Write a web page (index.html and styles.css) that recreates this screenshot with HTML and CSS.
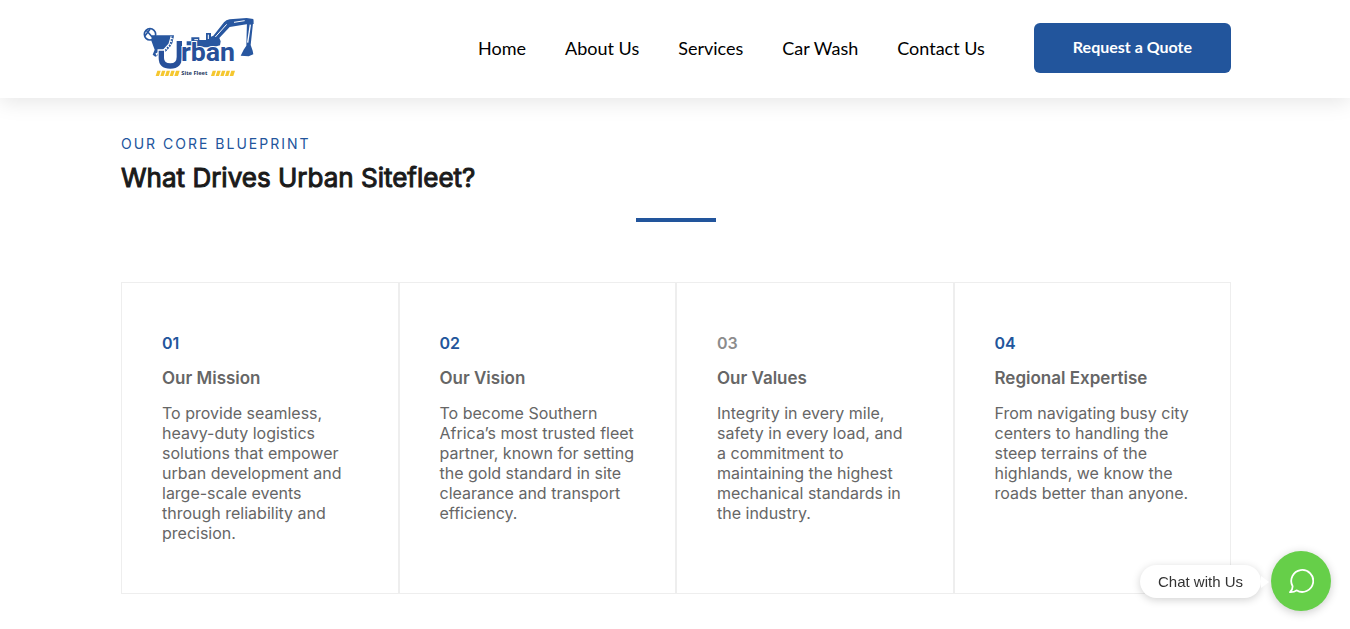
FILE: index.html
```html
<!DOCTYPE html>
<html lang="en">
<head>
<meta charset="utf-8">
<meta name="viewport" content="width=device-width, initial-scale=1">
<title>Urban Site Fleet</title>
<link rel="stylesheet" href="styles.css">
</head>
<body>
<header class="site-header">
  <div class="header-inner">
    <a class="logo" href="#" aria-label="Urban Site Fleet">
      <svg class="logo-art" viewBox="0 0 420 225" aria-hidden="true">
        <g fill="none" stroke="#2857a0" stroke-width="5">
          <circle cx="60" cy="73" r="17"/>
          <path d="M48 60 72 87M45 77 60 58"/>
        </g>
        <path d="M66 76H132L127 100 108 124 76 140 68 134 74 119 64 92Z" fill="#2857a0"/>
        <path d="M126 79 119 103 101 123 78 134" fill="none" stroke="#fff" stroke-width="8"/>
        <path d="M128 79 121 105 102 126 78 137" fill="none" stroke="#2857a0" stroke-width="6" stroke-dasharray="5 4"/>
        <path d="M170 94H184V82H208V90H228V69H243V80L250 77 282 37Q288 29 299 28L350 24 370 27 371 42 359 41 299 51 268 84 272 94 270 106 249 112H190L184 106H170Z" fill="#2857a0"/>
        <path d="M193 89H204M235 74V87M256 81 290 43M312 37 344 32" fill="none" stroke="#fff" stroke-width="3"/>
        <path d="M351 31H370L362 105 368 122 370 133 356 139 332 137 341 119 349 107Z" fill="#2857a0"/>
        <path d="M361 44 353 98" fill="none" stroke="#fff" stroke-width="4"/>
        <path d="M94 118V144Q94 168 121 168Q148 168 148 141V93" fill="none" stroke="#fff" stroke-width="23"/>
        <path d="M94 122V144Q94 168 121 168Q148 168 148 141V93" fill="none" stroke="#27509a" stroke-width="16"/>
        <text class="logo-name" x="153" y="153">rban</text>
        <path d="M82 182H92L87 198H77ZM96 182H106L101 198H91ZM110 182H120L115 198H105ZM124 182H134L129 198H119ZM138 182H149L144 198H133ZM248 182H258L253 198H243ZM262 182H272L267 198H257ZM276 182H286L281 198H271ZM290 182H300L295 198H285ZM304 182H315L310 198H299Z" fill="#f5c72f"/>
        <text class="logo-sub" x="154" y="195">Site Fleet</text>
      </svg>
    </a>
    <nav class="main-nav" aria-label="Main">
      <a href="#">Home</a>
      <a href="#">About Us</a>
      <a href="#">Services</a>
      <a href="#">Car Wash</a>
      <a href="#">Contact Us</a>
    </nav>
    <a class="quote-button" href="#">Request a Quote</a>
  </div>
</header>
<main class="blueprint">
  <p class="eyebrow">OUR CORE BLUEPRINT</p>
  <h1 class="title">What Drives Urban Sitefleet?</h1>
  <div class="divider"></div>
  <div class="cards">
    <article class="card">
      <span class="number">01</span>
      <h2 class="card-title">Our Mission</h2>
      <p class="card-text">To provide seamless, heavy-duty logistics solutions that empower urban development and large-scale events through reliability and precision.</p>
    </article>
    <article class="card">
      <span class="number">02</span>
      <h2 class="card-title">Our Vision</h2>
      <p class="card-text">To become Southern Africa’s most trusted fleet partner, known for setting the gold standard in site clearance and transport efficiency.</p>
    </article>
    <article class="card">
      <span class="number number-muted">03</span>
      <h2 class="card-title">Our Values</h2>
      <p class="card-text">Integrity in every mile, safety in every load, and a commitment to maintaining the highest mechanical standards in the industry.</p>
    </article>
    <article class="card">
      <span class="number">04</span>
      <h2 class="card-title">Regional Expertise</h2>
      <p class="card-text">From navigating busy city centers to handling the steep terrains of the highlands, we know the roads better than anyone.</p>
    </article>
  </div>
</main>
<div class="chat">
  <span class="chat-label" id="chat-label">Chat with Us</span>
  <button class="chat-button" type="button" aria-labelledby="chat-label">
    <svg class="chat-icon" viewBox="0 0 26 26" aria-hidden="true">
      <path d="M4.600 18.200A11 11 0 1 1 8.500 22.300Q6.200 24.400 2 24.200Q4.700 21.900 4.600 18.200Z" fill="none" stroke="#fff" stroke-width="1.800" stroke-linejoin="round"/>
    </svg>
  </button>
</div>
</body>
</html>
```

FILE: styles.css
```css
* {
  box-sizing: border-box;
}

body {
  margin: 0;
  background: #fff;
  color: #666;
  font-family: Inter, sans-serif;
  font-size: 16px;
  line-height: 20px;
}

.site-header {
  position: relative;
  padding: 10px 119px 13px 121px;
  background: #fff;
  box-shadow: 0 4px 20px rgba(0, 0, 0, 0.1);
}

.header-inner,
.blueprint {
  max-width: 1110px;
  margin: 0 auto;
}

.header-inner {
  display: flex;
  align-items: center;
}

.logo {
  margin-left: 9px;
}

.logo-art {
  display: block;
  width: 140px;
  height: 75px;
}

.logo-name {
  fill: #27509a;
  stroke: #fff;
  stroke-width: 6px;
  paint-order: stroke;
  font: 700 80px Roboto, sans-serif;
}

.logo-sub {
  fill: #26365e;
  font: 700 17px "Noto Sans", sans-serif;
}

.main-nav {
  display: flex;
  gap: 39px;
  margin-left: auto;
  margin-right: 49px;
}

.main-nav a {
  color: #000;
  font-family: Lato, sans-serif;
  font-size: 18px;
  line-height: 24px;
  text-decoration: none;
  white-space: nowrap;
}

.quote-button {
  padding: 12px 39px 14px;
  border-radius: 6px;
  background: #22559c;
  color: #fff;
  font-family: Lato, sans-serif;
  font-size: 16px;
  font-weight: 700;
  line-height: 24px;
  text-decoration: none;
  white-space: nowrap;
}

.blueprint {
  box-sizing: content-box;
  padding: 36px 119px 35px 121px;
}

.eyebrow {
  margin: 0 0 8px;
  color: #22559c;
  font-size: 14px;
  letter-spacing: 2px;
}

.title {
  margin: 0 0 24px;
  color: #1a1a1a;
  font-size: 26px;
  font-weight: 400;
  line-height: 32px;
  -webkit-text-stroke: 1px #1a1a1a;
}

.divider {
  width: 80px;
  height: 4px;
  margin: 0 auto 60px;
  background: #22559c;
}

.cards {
  display: grid;
  grid-template-columns: repeat(4, 1fr);
}

.card {
  padding: 50px 40px;
  border: 1px solid #eee;
}

.number {
  display: block;
  margin-bottom: 15px;
  color: #22559c;
  font-weight: 600;
}

.number-muted {
  color: #8c8c8c;
}

.card-title {
  margin: 0 0 15px;
  font-size: 17px;
  font-weight: 600;
  line-height: 20px;
}

.card-text {
  margin: 0;
}

.chat {
  position: fixed;
  right: 19px;
  bottom: 18px;
  display: flex;
  align-items: center;
  gap: 10px;
}

.chat-label {
  position: relative;
  padding: 7px 18px 6px;
  border-radius: 17px;
  background: #fff;
  box-shadow: 0 2px 8px rgba(0, 0, 0, 0.18);
  color: #333;
  font-family: "Liberation Sans", Arial, sans-serif;
  font-size: 15px;
}

.chat-label::after {
  position: absolute;
  top: 11px;
  left: 100%;
  border: 6px solid transparent;
  border-left: 8px solid #fff;
  border-right: 0;
  content: "";
}

.chat-button {
  display: grid;
  place-items: center;
  width: 60px;
  height: 60px;
  padding: 0;
  border: 0;
  border-radius: 50%;
  background: #66cf49;
  box-shadow: 0 2px 10px rgba(0, 0, 0, 0.2);
}

.chat-icon {
  width: 26px;
  height: 26px;
}
```
